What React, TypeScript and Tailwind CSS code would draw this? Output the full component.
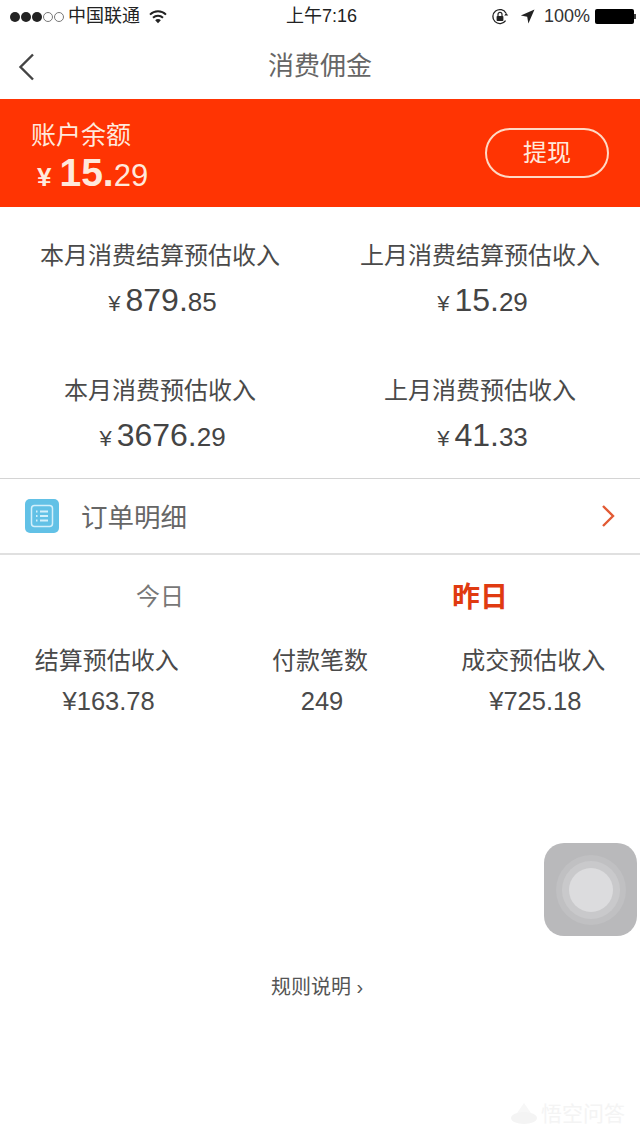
const font = "font-['Liberation_Sans','Noto_Sans_CJK_SC',sans-serif]";

function Yen({ int, dec, big = 'text-[32px]', small = 'text-[26px]', yen = 'text-[22px]', gap = 'mr-[5px]' }: { int: string; dec: string; big?: string; small?: string; yen?: string; gap?: string }) {
  return (
    <div className="flex items-baseline justify-center whitespace-nowrap">
      <span className={`${yen} ${gap}`}>¥</span>
      <span className={big}>{int}.</span>
      <span className={small}>{dec}</span>
    </div>
  );
}

function Stat({ label, int, dec, tall }: { label: string; int: string; dec: string; tall?: boolean }) {
  return (
    <div className={`flex flex-col items-center text-[#444] ${tall ? 'h-[135px]' : ''}`}>
      <div className="text-[24px] leading-[30px] text-[#4a4a4a]">{label}</div>
      <div className="mt-[11px] pl-[5px] leading-[36px]"><Yen int={int} dec={dec} /></div>
    </div>
  );
}

function Small({ label, value }: { label: string; value: string }) {
  return (
    <div className="flex flex-col items-center">
      <div className="text-[24px] leading-[30px] text-[#4a4a4a]">{label}</div>
      <div className="mt-[10px] pl-[4px] text-[25.5px] leading-[30px] text-[#4a4a4a]">{value}</div>
    </div>
  );
}

export default function App() {
  return (
    <div className={`relative h-[1138px] w-[640px] overflow-hidden bg-white ${font}`}>
      {/* status bar */}
      <div className="relative flex h-[33px] items-center justify-between pl-[10px] pr-[4px] text-[18px] text-[#222]">
        <div className="flex items-center">
          <div className="flex gap-[1px]">
            {[0, 1, 2].map((i) => <span key={i} className="h-[10px] w-[10px] rounded-full bg-[#222]" />)}
            {[0, 1].map((i) => <span key={i} className="h-[10px] w-[10px] rounded-full border border-[#777]" />)}
          </div>
          <span className="ml-[4px]">中国联通</span>
          <svg className="ml-[9px]" width="18" height="14" viewBox="0 0 18 14">
            <path d="M1 4.6a11.5 11.5 0 0 1 16 0" fill="none" stroke="#222" strokeWidth="2" />
            <path d="M4 7.8a7.2 7.2 0 0 1 10 0" fill="none" stroke="#222" strokeWidth="2" />
            <path d="M6.2 10.2a3.8 3.8 0 0 1 5.6 0L9 13.2z" fill="#222" />
          </svg>
        </div>
        <div className="absolute left-[286px] top-0 text-[18px] leading-[33px]">上午7:16</div>
        <div className="flex items-center">
          <svg width="18" height="18" viewBox="0 0 18 18">
            <path d="M14.6 12.6A7 7 0 1 1 15 5.2" fill="none" stroke="#222" strokeWidth="1.3" />
            <path d="M13.2 6.5h4l-2-2.4z" fill="#222" transform="translate(0 1)" />
            <rect x="5.6" y="8" width="6.8" height="5" rx="0.8" fill="#222" />
            <path d="M7 8V6.4a2 2 0 0 1 4 0V8" fill="none" stroke="#222" strokeWidth="1.2" />
          </svg>
          <svg className="ml-[11px]" width="15" height="15" viewBox="0 0 15 15">
            <path d="M14.5 0.5 0.8 6.6l6.4 1.2 1.2 6.7z" fill="#222" />
          </svg>
          <span className="ml-[9px] mr-[1px] text-[#333]">100%</span>
          <div className="ml-[4px] flex items-center">
            <div className="h-[15px] w-[39px] rounded-[2px] bg-black" />
            <div className="h-[5px] w-[2px] bg-[#444]" />
          </div>
        </div>
      </div>

      {/* title bar */}
      <div className="relative flex h-[66px] items-center justify-center">
        <svg className="absolute left-[18px] top-[20px]" width="18" height="28" viewBox="0 0 18 28">
          <path d="M15 1.5 2.5 14 15 26.5" fill="none" stroke="#444" strokeWidth="2.4" />
        </svg>
        <div className="text-[26px] text-[#666]">消费佣金</div>
      </div>

      {/* balance */}
      <div className="flex h-[108px] items-center justify-between bg-[#ff3403] pl-[31px] pr-[31px] text-[#ffe9dc]">
        <div className="pt-[10px]">
          <div className="text-[25px] leading-[30px]">账户余额</div>
          <div className="ml-[6px] mt-[3px] leading-[40px]">
            <Yen int="15" dec="29" big="text-[39px] font-bold" small="text-[31px]" yen="text-[26px] font-bold" gap="mr-[8px]" />
          </div>
        </div>
        <div className="flex h-[50px] w-[124px] items-center justify-center rounded-full border-2 border-[#ffd9c4] text-[24px]">提现</div>
      </div>

      {/* stats */}
      <div className="grid h-[272px] grid-cols-2 content-start border-b border-[#d4d4d4] pt-[34px]">
        <Stat label="本月消费结算预估收入" int="879" dec="85" tall />
        <Stat label="上月消费结算预估收入" int="15" dec="29" tall />
        <Stat label="本月消费预估收入" int="3676" dec="29" />
        <Stat label="上月消费预估收入" int="41" dec="33" />
      </div>

      {/* order row */}
      <div className="flex h-[76px] items-center border-b-2 border-[#e0e0e0] pl-[25px] pr-[24px]">
        <div className="flex h-[34px] w-[34px] items-center justify-center rounded-[5px] bg-[#62c1e6]">
          <svg width="26" height="26" viewBox="0 0 26 26" fill="none" stroke="#d3f0fb" strokeWidth="1.5">
            <rect x="2.5" y="2.5" width="21" height="21" rx="3" />
            <path d="M7 8.5h1.5M7 13h1.5M7 17.5h1.5M11 8.5h8M11 13h8M11 17.5h8" strokeWidth="1.8" />
          </svg>
        </div>
        <div className="ml-[22px] flex-1 pt-[6px] text-[26.5px] text-[#666]">订单明细</div>
        <svg width="15" height="24" viewBox="0 0 15 24">
          <path d="M2 2l10 10L2 22" fill="none" stroke="#e25a34" strokeWidth="2.4" />
        </svg>
      </div>

      {/* tabs */}
      <div className="grid h-[83px] grid-cols-2 items-center">
        <div className="text-center text-[24px] text-[#777]">今日</div>
        <div className="pt-[2px] text-center text-[28px] font-bold text-[#e03a10]">昨日</div>
      </div>

      {/* today */}
      <div className="grid grid-cols-3 pt-[8px]">
        <Small label="结算预估收入" value="¥163.78" />
        <Small label="付款笔数" value="249" />
        <Small label="成交预估收入" value="¥725.18" />
      </div>

      <div className="mt-[256px] pr-[6px] text-center text-[20px] text-[#555]">规则说明 ›</div>

      {/* assistive touch */}
      <div className="absolute left-[544px] top-[843px] flex h-[93px] w-[93px] items-center justify-center rounded-[20px] bg-[#b9b9bb]">
        <div className="flex h-[70px] w-[70px] items-center justify-center rounded-full bg-[#c0c0c2]">
          <div className="flex h-[58px] w-[58px] items-center justify-center rounded-full bg-[#c9c9cb]">
            <div className="h-[44px] w-[44px] rounded-full bg-[#dcdcde]" />
          </div>
        </div>
      </div>

      {/* watermark */}
      <div className="absolute left-[510px] top-[1101px] flex items-center whitespace-nowrap text-[21px] leading-[26px] text-[#f4f4f4]">
        <svg width="28" height="24" viewBox="0 0 28 24" className="mr-[3px]">
          <path d="M14 1 21 11H7z" fill="#f7f7f7" />
          <ellipse cx="14" cy="16" rx="13" ry="6" fill="#f4f4f4" />
        </svg>
        悟空问答
      </div>
    </div>
  );
}
